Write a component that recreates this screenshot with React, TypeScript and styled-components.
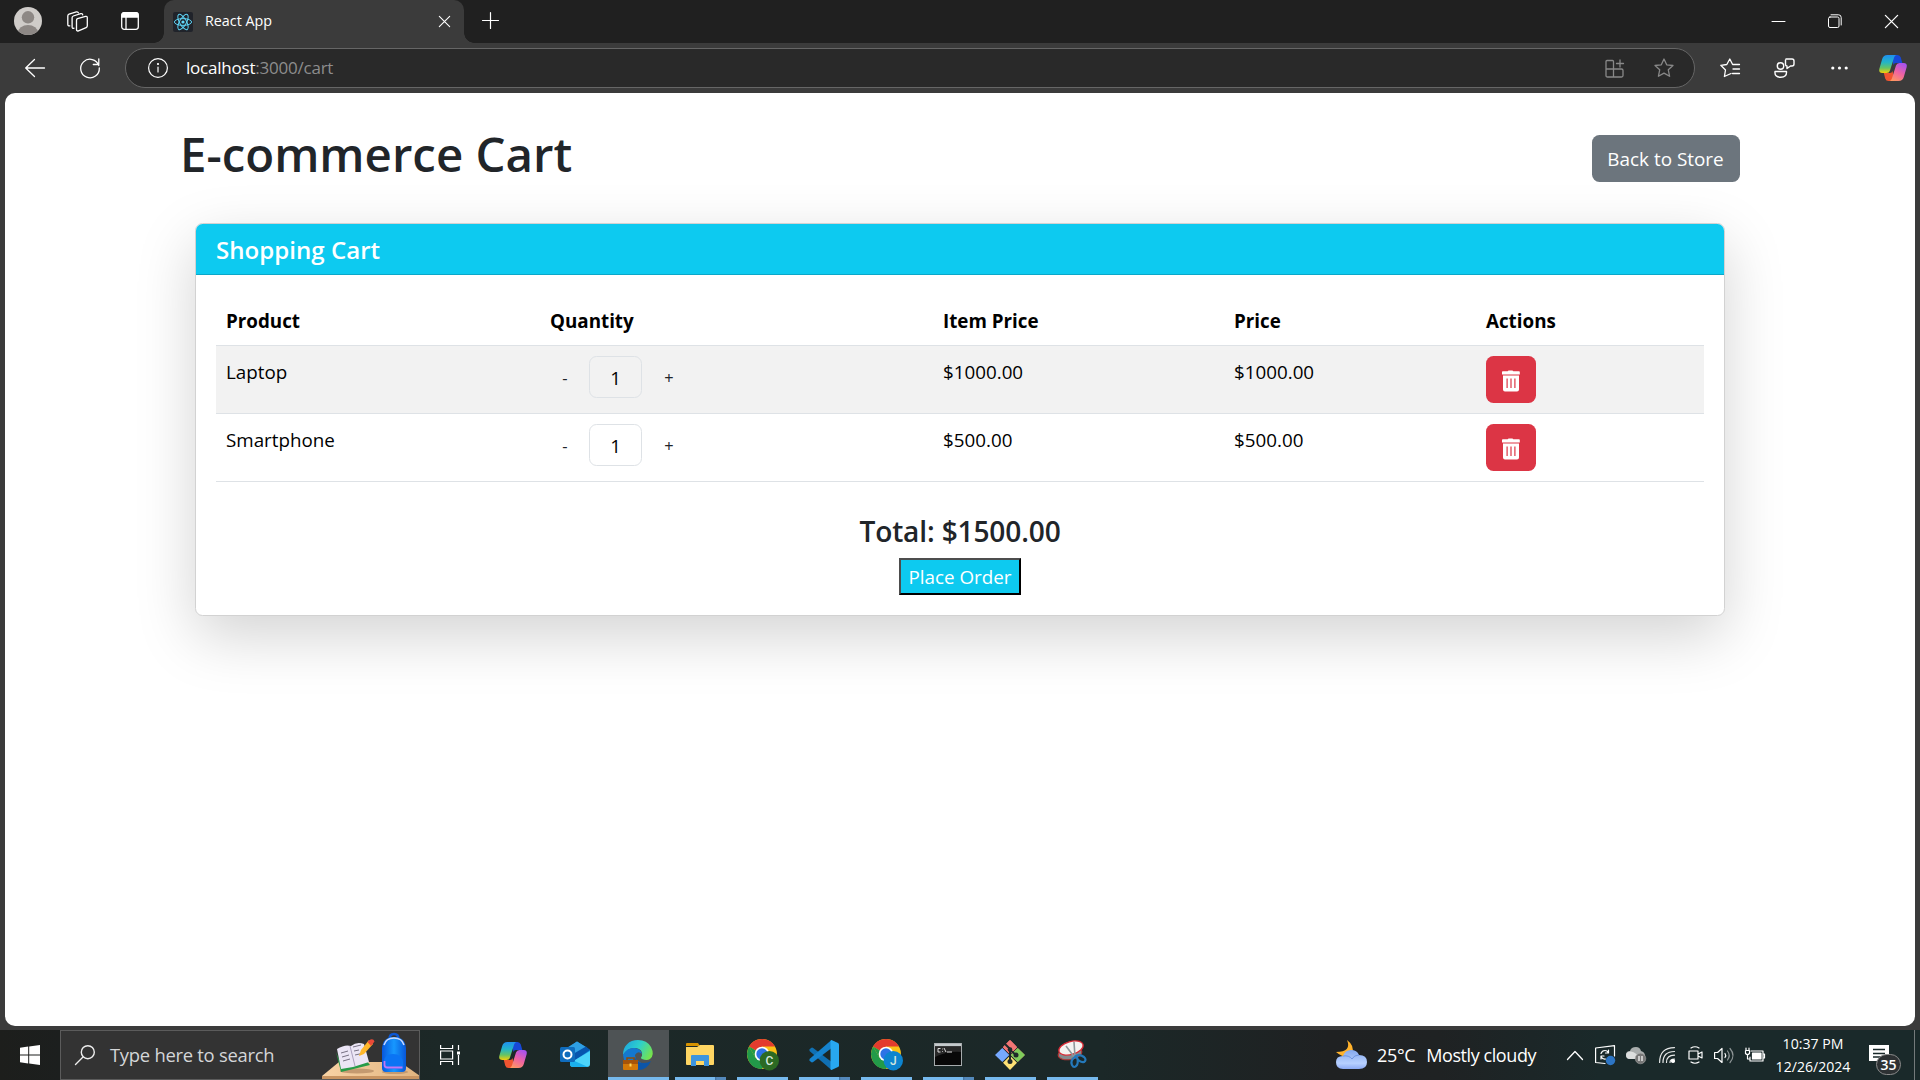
import React from "react";
import styled, { createGlobalStyle } from "styled-components";

const Global = createGlobalStyle`
  *, *::before, *::after { box-sizing: border-box; }
  html, body { margin: 0; padding: 0; }
  body {
    width: 1920px; height: 1080px; overflow: hidden; background: #3b3b3b;
    font-family: "Open Sans", "Noto Sans", sans-serif;
  }
  h1, h2, h3, h5, p { margin: 0; }
  svg { display: block; overflow: visible; flex: none; }
  button { font-family: inherit; cursor: pointer; }
`;

const Window = styled.div`
  width: 1920px; height: 1080px; display: flex; flex-direction: column; background: #3b3b3b;
`;

/* ---------- title bar ---------- */
const TabBar = styled.header`
  height: 43px; flex: none; display: flex; background: #202020; color: #fff;
`;
const TabTools = styled.div`
  width: 164px; display: flex; align-items: flex-start; padding: 7px 0 0 14px;
`;
const ToolSlot = styled.div<{ $w: number; $top?: number }>`
  width: ${(p) => p.$w}px; padding-top: ${(p) => p.$top ?? 0}px; flex: none;
`;
const Tab = styled.div`
  width: 300px; height: 43px; background: #3b3b3b; border-radius: 10px 10px 0 0;
  display: flex; align-items: center; padding: 0 14px 0 9px; position: relative;
  &::before, &::after {
    content: ""; position: absolute; bottom: 0; width: 10px; height: 10px;
  }
  &::before { left: -10px; background: radial-gradient(circle at 0 0, transparent 9.5px, #3b3b3b 10px); }
  &::after { right: -10px; background: radial-gradient(circle at 100% 0, transparent 9.5px, #3b3b3b 10px); }
`;
const TabTitle = styled.span`
  flex: 1; margin-left: 12px; font-size: 14.3px; line-height: 20px; color: #fff; padding-bottom: 2px;
`;
const NewTab = styled.div`padding: 12px 0 0 18px;`;
const WindowButtons = styled.div`
  margin-left: auto; display: flex; align-items: center; gap: 43px; padding: 0 22px 1px 0;
`;

/* ---------- address bar ---------- */
const NavBar = styled.nav`
  height: 50px; flex: none; display: flex; align-items: flex-start; padding: 5px 0 0 25px;
`;
const NavIcon = styled.div<{ $w: number }>`
  width: ${(p) => p.$w}px; height: 40px; flex: none; display: flex; align-items: center;
`;
const Address = styled.div`
  width: 1570px; height: 40px; flex: none; display: flex; align-items: center;
  border: 1px solid #666; border-radius: 20px; background: #292929; padding: 0 20px 0 22px;
`;
const Url = styled.span`
  flex: 1; margin-left: 18px; font-size: 17px; letter-spacing: -0.22px; line-height: 24px; color: #8d8d8d;
  b { font-weight: 400; color: #fff; }
`;
const AddressIcons = styled.div`display: flex; align-items: center; gap: 30px; color: #888;`;
const NavRight = styled.div`
  flex: 1; height: 40px; display: flex; align-items: center; padding-left: 25px; color: #fff;
`;

/* ---------- page ---------- */
const Page = styled.main`
  width: 1910px; height: 933px; flex: none; margin: 0 5px; background: #fff; border-radius: 10px;
  overflow: hidden; color: #212529;
`;
const PageHeader = styled.div`
  display: flex; justify-content: space-between; align-items: flex-start;
  padding: 30px 175px 0 175px; height: 130px;
`;
const PageTitle = styled.h1`
  font-size: 47.4px; line-height: 60px; font-weight: 600; padding-top: 1px;
`;
const StoreButton = styled.button`
  margin-top: 12px; width: 148px; height: 47px; border: 0; border-radius: 7.5px; background: #6c757d;
  color: #fff; font-size: 18.9px; line-height: 30px; padding: 0 1px 0 0; white-space: nowrap;
`;
const Card = styled.section`
  width: 1530px; height: 393px; margin: 0 auto; background: #fff; border: 1px solid #d2d2d2;
  border-radius: 7.5px; box-shadow: 0 20px 60px rgba(0, 0, 0, 0.175);
`;
const CardHeader = styled.div`
  height: 51px; background: #0dcaf0; border-bottom: 1px solid #0ba7c8; border-radius: 6.5px 6.5px 0 0;
  padding: 11px 20px 9px; color: #fff;
`;
const CardTitle = styled.h5`font-size: 24.1px; line-height: 30px; font-weight: 600;`;
const CardBody = styled.div`padding: 20px; display: flex; flex-direction: column; align-items: center;`;
const Table = styled.div`width: 1488px; color: #000; font-size: 18.8px; line-height: 30px;`;
const Row = styled.div<{ $striped?: boolean; $head?: boolean }>`
  display: grid; grid-template-columns: 324px 393px 291px 252px 1fr;
  height: ${(p) => (p.$head ? 51 : 68)}px; border-bottom: 1px solid #dee2e6;
  background: ${(p) => (p.$striped ? "#f2f2f2" : "#fff")};
  font-weight: ${(p) => (p.$head ? 700 : 400)};
`;
const Cell = styled.div`padding: 11px 10px 9px;`;
const ControlCell = styled.div`padding: 10px; display: flex; align-items: flex-start;`;
const StepButton = styled.button`
  width: 30px; height: 42px; border: 0; background: transparent; padding: 2px 0 0; color: #212529;
  font-size: 16.4px; line-height: 26px;
`;
const Count = styled.span`
  width: 53px; height: 42px; margin: 0 12px 0 9px; border: 1px solid #dee2e6; border-radius: 7.5px;
  display: grid; place-items: center; line-height: 30px; padding-top: 2px;
`;
const DeleteButton = styled.button`
  width: 50px; height: 47px; padding: 2px 0 0; border: 0; border-radius: 7.5px; background: #dc3545;
  display: grid; place-items: center;
`;
const Total = styled.h3`
  margin-top: 31px; font-size: 28.1px; line-height: 36px; font-weight: 600; letter-spacing: -0.15px;
`;
const OrderButton = styled.button`
  margin-top: 9px; width: 122px; height: 37px; padding: 0; background: #0dcaf0; color: #fff;
  border: 2px solid; border-color: #4d4d4d #000 #000 #4d4d4d; font-size: 18.8px; line-height: 30px;
  white-space: nowrap;
`;

/* ---------- taskbar ---------- */
const Taskbar = styled.footer`
  height: 50px; flex: none; margin-top: 4px; display: flex; color: #fff;
  background: linear-gradient(90deg, #1d1e1c 0, #1c1f1e 60px, #1c2827 440px, #1b2828 1100px, #1f2122 1330px, #1f2223 1440px, #1a292a 1600px, #1a292a 100%);
`;
const Start = styled.div`width: 60px; display: grid; place-items: center;`;
const Search = styled.div`
  width: 360px; height: 50px; border: 1px solid #5b5b5b; background: #333; display: flex;
  align-items: center; padding-left: 14px; overflow: hidden;
`;
const SearchText = styled.span`
  flex: 1; margin-left: 15px; font-size: 18.4px; letter-spacing: -0.26px; line-height: 28px;
  color: #d4d6d8; white-space: nowrap;
`;
const SearchArtwork = styled.div`margin-right: -1px;`;
const AppList = styled.div`display: flex;`;
const AppSlot = styled.div<{ $active?: boolean; $w?: number }>`
  width: ${(p) => p.$w ?? 61}px; margin-right: ${(p) => (p.$w ? 0 : 1)}px; height: 50px; display: flex;
  flex-direction: column; align-items: center; justify-content: space-between;
  background: ${(p) => (p.$active ? "#4e5355" : "transparent")};
`;
const AppIcon = styled.div`height: 47px; display: grid; place-items: center; padding: 2px 1px 0 0;`;
const Underline = styled.div<{ $full?: boolean; $split?: boolean }>`
  width: ${(p) => (p.$full ? "100%" : "51px")}; height: 3px;
  background: ${(p) => (p.$split ? "linear-gradient(90deg,#76b9ed 40px,#3f6f9d 40px,#5489bb 42px)" : "#76b9ed")};
`;
const Weather = styled.div`
  margin-left: auto; width: 224px; display: flex; align-items: center; font-size: 18px; white-space: nowrap;
`;
const Temp = styled.span`margin: 0 11px 0 10px; letter-spacing: -0.35px;`;
const Cond = styled.span`letter-spacing: -0.42px;`;
const Tray = styled.div`display: flex; align-items: center; width: 212px;`;
const TraySlot = styled.div<{ $w: number }>`width: ${(p) => p.$w}px; display: grid; place-items: center;`;
const Clock = styled.div`
  width: 82px; display: flex; flex-direction: column; align-items: center; padding-top: 2px;
  font-size: 14.1px; line-height: 23px; white-space: nowrap;
`;
const Notice = styled.div`width: 45px; margin-left: 15px; padding-top: 15px; position: relative;`;
const Badge = styled.span`
  position: absolute; left: 7px; top: 24px; width: 25px; height: 21px; border-radius: 11px;
  border: 1px solid #8b8b8b; background: #2d3133; font-size: 14px; font-weight: 600; line-height: 19px;
  text-align: center;
`;
const Peek = styled.div`width: 6px; border-left: 1px solid #747a7b;`;

const line = { fill: "none", stroke: "currentColor", strokeLinecap: "round" as const, strokeLinejoin: "round" as const };

const Avatar = () => (
  <svg width="28" height="28" viewBox="0 0 28 28">
    <clipPath id="av"><circle cx="14" cy="14" r="14" /></clipPath>
    <circle cx="14" cy="14" r="14" fill="#cfccc9" />
    <g clipPath="url(#av)" fill="#8d8885"><circle cx="14" cy="10.3" r="6.2" /><ellipse cx="14" cy="25.5" rx="10" ry="7.5" /></g>
  </svg>
);
const Workspaces = () => (
  <svg width="21" height="21" viewBox="0 0 21 21" {...line} strokeWidth="1.3">
    <path d="M10.5 7.7 18.5 5.4q1.8-.4 1.8 1.3v8q0 1.4-1.2 1.9l-7.6 3.2q-2 .7-2-1.3V9.4q0-1.3 1-1.7Z" />
    <path d="M7 17.2q-1.9.6-1.9-1.2V6.8q0-1.4 1.2-1.8l7.4-2.3q1.700-.4 2 1.1" />
    <path d="M2.8 14.8q-2 .3-2-1.4V5q0-1.4 1.2-1.8L9.4.9q1.6-.4 2 1" />
  </svg>
);
const TabActions = () => (
  <svg width="18" height="18" viewBox="0 0 18 18" {...line} strokeWidth="1.3">
    <rect x=".7" y=".7" width="16.6" height="16.6" rx="2.5" /><path d="M1 3q0-2.3 2.3-2.3h11.4Q17 .7 17 3v2H1Z" fill="currentColor" /><path d="M5 5v12" />
  </svg>
);
const ReactLogo = () => (
  <svg width="20" height="20" viewBox="0 0 20 20" fill="none" stroke="#5ed3f3" strokeWidth="1">
    <rect width="20" height="20" rx="2" fill="#20232a" stroke="none" />
    {[0, 60, 120].map((a) => <ellipse key={a} cx="10" cy="10" rx="8.6" ry="3.4" transform={`rotate(${a} 10 10)`} />)}
    <circle cx="10" cy="10" r="1.6" fill="#61dafb" stroke="none" />
  </svg>
);
const Cross = ({ s = 10 }: { s?: number }) => (
  <svg width={s} height={s} viewBox="0 0 10 10" {...line} strokeWidth="1"><path d="M.3.3 9.7 9.7M9.7.3.3 9.7" /></svg>
);
const StarIcon = () => (
  <svg width="20" height="20" viewBox="0 0 20 20" {...line} strokeWidth="1.3">
    <path d="m10 1 2.7 5.8 6.3.7-4.7 4.3 1.3 6.5L10 15.1l-5.6 3.2 1.3-6.5L1 7.5l6.3-.7Z" />
  </svg>
);
const Copilot = () => (
  <svg width="28" height="26" viewBox="0 0 28 26">
    <defs>
      <linearGradient id="cA" x1="0" y1="0" x2="0" y2="1"><stop offset="0" stopColor="#1f8ff0" /><stop offset=".4" stopColor="#23b5c8" /><stop offset=".72" stopColor="#66c465" /><stop offset="1" stopColor="#f5cf08" /></linearGradient>
      <linearGradient id="cB" x1=".7" y1="0" x2=".2" y2="1"><stop offset="0" stopColor="#a952ed" /><stop offset=".5" stopColor="#ef63a2" /><stop offset="1" stopColor="#ff9860" /></linearGradient>
    </defs>
    <path d="M13 0h5.5q2.5 0 3.3 2.6L23.3 8H17q-2 0-2.6 2Z" fill="#1748d8" />
    <path d="M15 26H9.5Q7 26 6.2 23.4L4.8 18H11q2 0 2.6-2Z" fill="#f05430" />
    <path d="M8.5 0h9q-1.7.3-2.4 2.6L11 15.5Q10.2 18 7.5 18H3.5Q-.5 18 .3 14L3.2 4Q4.3 0 8.5 0Z" fill="url(#cA)" />
    <path d="M19.5 26h-9q1.7-.3 2.4-2.6L17 10.5Q17.8 8 20.5 8h4Q28.5 8 27.7 12L24.8 22Q23.7 26 19.5 26Z" fill="url(#cB)" />
  </svg>
);
const Trash = () => (
  <svg width="20" height="22" viewBox="0 0 20 22">
    <path fill="#fff" d="M6.700 1.300q.2-.8 1.200-.8h3.200q1 0 1.200.8h5.700q.8 0 .8.800V4.500H1V2.100q0-.8.8-.8Z" />
    <path fill="#fff" fillRule="evenodd" d="M2 5.600h16v13.900q0 2-2 2h-12q-2 0-2-2ZM5.500 8.500v9.500h1.200V8.500Zm3.900 0v9.500h1.200V8.500Zm3.900 0v9.500h1.200V8.500Z" />
  </svg>
);
const SearchArt = () => (
  <svg width="98" height="48" viewBox="0 0 98 48">
    <defs>
      <linearGradient id="bag" x1="0" x2="1"><stop stopColor="#0757de" /><stop offset=".5" stopColor="#1798ff" /><stop offset="1" stopColor="#0756d8" /></linearGradient>
      <linearGradient id="desk" x1="0" x2="1"><stop stopColor="#f9d3a5" /><stop offset="1" stopColor="#e0b480" /></linearGradient>
    </defs>
    <path d="M17 31h61l20 14H0Z" fill="url(#desk)" /><path d="M0 45h98v4H0Z" fill="#c99562" />
    <ellipse cx="35" cy="40" rx="17" ry="2.5" fill="#c49a70" /><ellipse cx="73" cy="41" rx="13" ry="2" fill="#c49a70" />
    <path d="m14 21 5 20 29-7-4-5-24 7Z" fill="#279b48" />
    <path d="m15 18 4 20 12-2 16-5-5-18q-7-3-13 2-6-2-14 3Z" fill="#ebe5f5" />
    <path d="M28 15 33 35" stroke="#aaa0bd" strokeWidth="1" />
    <path d="m19 22 7-2m-6 6 7-2m-6 6 7-2m3-12 8-2m-7 6 5-1m-4 5 9-2" stroke="#777184" strokeWidth="1" />
    <path d="m37 25 2-6L47 9l4 4-9 10Z" fill="#ffb72b" /><path d="m45.500 11 3-2.500q3-1 4 2l-3.500 4.500Z" fill="#e94a38" />
    <path d="M67.500 8q0-5 4.500-5t4.500 5" fill="none" stroke="#0b57d4" strokeWidth="2.500" />
    <path d="M60 17q1-11 12-11t12 11v20q0 4-4 4H64q-4 0-4-4Z" fill="url(#bag)" />
    <path d="M62 14q2-7 10-7t10 7" fill="none" stroke="#c9d9ff" strokeWidth="1.5" />
    <path d="M62 31q0-8 9-8t10 8v5q0 2-2 2H64q-2 0-2-2Z" fill="#0b74f4" /><path d="M62.500 30v4q0 2.500 3 2.500h15" stroke="#c176f3" strokeWidth="1.800" fill="none" />
  </svg>
);
const TaskView = () => (
  <svg width="20" height="20" viewBox="0 0 20 20" fill="none" stroke="#fff" strokeWidth="1.2">
    <path d="M.6 0v3.5h12V0M.6 20v-3.5h12V20M.6 6h12v8H.6ZM18.5 0v5m0 5v10" /><path d="M17 6.5h3v3h-3Z" fill="#fff" stroke="none" />
  </svg>
);
const Outlook = () => (
  <svg width="30" height="27" viewBox="0 0 30 27">
    <path d="M5 9 17 .5 30 9v10L17 23 5 17Z" fill="#1490df" /><path d="M5 8 17 .5 26 6 14 15Z" fill="#2e9fe4" />
    <path d="M13 13 26 5.5 30 9 14 20Z" fill="#0755ae" /><path d="M10 22 30 10v13q0 3-3 3H13q-3 0-3-3Z" fill="#4cd4fa" /><path d="m10 18 18 8H13q-3 0-3-3Z" fill="#1ab0ed" />
    <rect y="6" width="15" height="15" rx="1.5" fill="#0f6cbd" /><circle cx="7.5" cy="13.5" r="4" fill="none" stroke="#fff" strokeWidth="2" />
  </svg>
);
const Edge = () => (
  <svg width="30" height="30" viewBox="0 0 30 30">
    <defs><linearGradient id="eg" x1="0" x2="1" y1=".2" y2=".6"><stop stopColor="#1da5df" /><stop offset=".5" stopColor="#2ed0cb" /><stop offset="1" stopColor="#75e34e" /></linearGradient></defs>
    <path d="M0 15C0 6 6 0 15 0q9 0 13 7 4 8-1 12-3 2-8 0-2-1 0-3 1-7-6-8Q5 7 0 15Z" fill="url(#eg)" />
    <path d="M0 15Q4 7 12 8q6 1 7 6-4-4-7 1 0 8 11 9Q6 33 1 20Z" fill="#1378cf" /><path d="M12 17q1 6 9 6 4 0 7-2-4 9-13 9-8-4-3-13Z" fill="#0c55a8" />
    <rect y="20" width="15" height="10" rx="1" fill="#d37907" /><path d="M4 20v-2h7v2" fill="none" stroke="#8f4c08" strokeWidth="1.5" /><path d="M0 20h15v4H0Z" fill="#a65408" /><path d="M6.5 23.5h2v3h-2Z" fill="#ffd75a" />
  </svg>
);
const Folder = () => (
  <svg width="28" height="24" viewBox="0 0 28 24">
    <path d="M0 1q0-1 1-1h11l2 3H0Z" fill="#d69200" /><path d="M0 4h11l3-2h13q1 0 1 1v18q0 1-1 1H1q-1 0-1-1Z" fill="#ffd663" />
    <path d="M5 23V13q0-1 1-1h16q1 0 1 1v10h-5v-5h-8v5Z" fill="#3d95df" />
  </svg>
);
const Chrome = ({ letter, fill }: { letter: string; fill: string }) => (
  <svg width="32" height="32" viewBox="-1 0 32 32">
    <circle cx="15" cy="15" r="15" fill="#fbc116" /><path d="M15 15 2 7.5Q6 0 15 0t13 7.5H15Z" fill="#e33b2e" />
    <path d="M2 7.5Q-2 15 2 22.500 6 30 15 30l6.5-11.2L8.500 18.800Z" fill="#229a49" />
    <path d="M2 7.5 8.500 18.800 15 15Z" fill="#229a49" /><circle cx="15" cy="15" r="7.3" fill="#fff" /><circle cx="15" cy="15" r="5.7" fill="#2d73e6" />
    <circle cx="22.3" cy="21.7" r="9.7" fill={fill} /><text x="22.3" y="26" fill="#d5e6de" fontFamily="Roboto, sans-serif" fontSize="12" fontWeight="500" textAnchor="middle">{letter}</text>
  </svg>
);
const VsCode = () => (
  <svg width="30" height="30" viewBox="0 0 30 30">
    <path d="M.5 9.5 2 8q1-.8 2.200 0L24 23l-1.500 7L.5 11Z" fill="#1070b3" /><path d="M.5 20.500 2 22q1 .8 2.200 0L24 7l-1.500-7L.5 19Z" fill="#1583ce" />
    <path d="M22.500 0 29 3q1 .5 1 1.500v21q0 1-1 1.500L22.500 30q-1 0-1-1.500V1.500Q21.500 0 22.500 0Z" fill="#28a8f0" />
  </svg>
);
const Terminal = () => (
  <svg width="28" height="23" viewBox="0 0 28 23">
    <rect x=".5" y=".5" width="27" height="22" fill="#080808" stroke="#a6abad" /><path d="M1 2h26" stroke="#c5cbcd" strokeWidth="2.5" />
    <path d="M1 14Q13 8 27 9V4H1Z" fill="#282828" /><path d="M6.5 5.500H4V9h2.500M8 6h.7m-.7 2.500h.7M10 5l2 4m1 0h5" fill="none" stroke="#ddd" />
  </svg>
);
const Git = () => (
  <svg width="30" height="30" viewBox="0 0 30 30">
    <g transform="rotate(45 15 15)"><rect x="4.5" y="4.5" width="10" height="10" rx="1" fill="#f27574" /><rect x="15.5" y="4.5" width="10" height="10" rx="1" fill="#f27574" /></g>
    <g transform="rotate(45 15 15)"><rect x="4.500" y="4.500" width="10" height="10" rx="1" fill="#f27574" /></g>
    <path d="M15 0 22 7.200 15 14.400 8 7.200Z" fill="#f27574" />
    <path d="M22.700 8 30 15l-7.300 7-7-7Z" fill="#80cc5b" />
    <path d="M7.300 8 14.300 15l-7 7L0 15Z" fill="#76a9ff" />
    <path d="M15 15.700 22 22.800 15 30 8 22.800Z" fill="#ffe275" />
    <path d="M10 4 15 9v13m0-12 6 5" fill="none" stroke="#20292a" strokeWidth="2" /><circle cx="15" cy="9.500" r="2.300" fill="#20292a" /><circle cx="15" cy="21.500" r="2.500" fill="#20292a" /><circle cx="21" cy="15" r="2.500" fill="#20292a" />
  </svg>
);
const Snip = () => (
  <svg width="28" height="29" viewBox="0 0 28 29">
    <ellipse cx="12" cy="13.5" rx="12" ry="6" fill="#858b8e" stroke="#b23535" transform="rotate(-10 12 13.500)" />
    <ellipse cx="13" cy="8" rx="12.500" ry="6.500" fill="#f4f3f1" stroke="#d82a35" strokeWidth="1.300" transform="rotate(-16 13 8)" />
    <path d="m8 6 9 12M16 2l1 15" stroke="#8f979b" strokeWidth="1.6" /><path d="M17 17q-5 3-3 8 2 4 5 0 2-5-1-9 4-2 8 1 3 3 0 5-4 1-8-5Z" fill="none" stroke="#2479bb" strokeWidth="2.2" />
  </svg>
);
const Cloud = () => (
  <svg width="31" height="30" viewBox="0 0 31 30">
    <defs><linearGradient id="cl" x1="0" x2="0" y1="0" y2="1"><stop stopColor="#85a9ee" /><stop offset=".7" stopColor="#b7d0ff" /><stop offset="1" stopColor="#8caaf4" /></linearGradient></defs>
    <path d="M11 0q8 6 5 13-5 8-16-1Q16 12 11 0Z" fill="#ffb22c" />
    <path d="M7 29q-7 0-7-7 0-6 7-6 2-6 8-6t8 5q8 0 8 7 0 7-8 7Z" fill="url(#cl)" /><path d="M7 16q6-1 9 3 2-4 7-4" fill="none" stroke="#6f94df" />
  </svg>
);

const items = [
  { name: "Laptop", qty: 1, price: 1000 },
  { name: "Smartphone", qty: 1, price: 500 },
];
const money = (n: number) => `$${n.toFixed(2)}`;

export default function App() {
  const total = items.reduce((s, i) => s + i.qty * i.price, 0);
  return (
    <Window>
      <Global />
      <TabBar>
        <TabTools>
          <ToolSlot $w={53}><Avatar /></ToolSlot>
          <ToolSlot $w={54} $top={4}><Workspaces /></ToolSlot>
          <ToolSlot $w={20} $top={5}><TabActions /></ToolSlot>
        </TabTools>
        <Tab><ReactLogo /><TabTitle>React App</TabTitle><Cross s={11} /></Tab>
        <NewTab><svg width="17" height="17" viewBox="0 0 17 17" {...line} strokeWidth="1.2"><path d="M8.5.5v16M.5 8.5h16" /></svg></NewTab>
        <WindowButtons>
          <svg width="13" height="13" viewBox="0 0 13 13" {...line}><path d="M0 6.5h13" /></svg>
          <svg width="14" height="14" viewBox="0 0 14 14" {...line}><rect x=".5" y="3" width="10.5" height="10.5" rx="1.5" /><path d="M3 .8h7.500q2.700 0 2.700 2.700V11" /></svg>
          <Cross s={13} />
        </WindowButtons>
      </TabBar>
      <NavBar>
        <NavIcon $w={55}><svg width="20" height="18" viewBox="0 0 20 18" {...line} stroke="#fff" strokeWidth="1.3"><path d="M19.5 9H.7M9.5.5.7 9l8.800 8.500" /></svg></NavIcon>
        <NavIcon $w={45}><svg width="20" height="20" viewBox="0 0 20 20" {...line} stroke="#fff" strokeWidth="1.3"><path d="M18.800 7.500A9.300 9.300 0 1 0 19.300 10M18.800.8v5.700h-5.500" /></svg></NavIcon>
        <Address>
          <svg width="20" height="20" viewBox="0 0 20 20" {...line} stroke="#fff" strokeWidth="1.2"><circle cx="10" cy="10" r="9.4" /><path d="M10 9v5" /><circle cx="10" cy="6" r=".5" fill="#fff" /></svg>
          <Url><b>localhost</b>:3000/cart</Url>
          <AddressIcons>
            <svg width="19" height="19" viewBox="0 0 19 19" {...line} strokeWidth="1.3"><path d="M2 1.5h5.500q1 0 1 1V10H1V2.500q0-1 1-1ZM1 10h7.500v8H2.500Q1 18 1 16.500ZM8.500 10h8q1.500 0 1.500 1.500v5q0 1.500-1.500 1.500h-8ZM15 1v7m-3.500-3.500h7" /></svg>
            <StarIcon />
          </AddressIcons>
        </Address>
        <NavRight>
          <NavIcon $w={54}><svg width="20" height="20" viewBox="0 0 20 20" {...line} strokeWidth="1.3"><path d="M11 15.500 4.400 18.500 5.500 12 .8 7.300l6-.8L9.800 1l2.800 5.500H19.500M13 11h6.500m-7 4.500h7" /></svg></NavIcon>
          <NavIcon $w={57}><svg width="21" height="20" viewBox="0 0 21 20" {...line} strokeWidth="1.4"><circle cx="6.5" cy="8" r="3.2" /><path d="M1 13.500h11.500Q13 19.300 6.700 19.300T1 13.500ZM12 1h6q2 0 2 2v3q0 2-2 2h-1.500L13 10.500V8q-1.500 0-1.500-1.500V2" /></svg></NavIcon>
          <NavIcon $w={48}><svg width="17" height="4" viewBox="0 0 17 4"><g fill="#fff"><circle cx="1.8" cy="2" r="1.6" /><circle cx="8.5" cy="2" r="1.6" /><circle cx="15.2" cy="2" r="1.6" /></g></svg></NavIcon>
          <Copilot />
        </NavRight>
      </NavBar>

      <Page>
        <PageHeader><PageTitle>E-commerce Cart</PageTitle><StoreButton>Back to Store</StoreButton></PageHeader>
        <Card>
          <CardHeader><CardTitle>Shopping Cart</CardTitle></CardHeader>
          <CardBody>
            <Table>
              <Row $head>{["Product", "Quantity", "Item Price", "Price", "Actions"].map((h) => <Cell key={h}>{h}</Cell>)}</Row>
              {items.map((it, i) => (
                <Row key={it.name} $striped={i % 2 === 0}>
                  <Cell>{it.name}</Cell>
                  <ControlCell><StepButton>-</StepButton><Count>{it.qty}</Count><StepButton>+</StepButton></ControlCell>
                  <Cell>{money(it.price)}</Cell>
                  <Cell>{money(it.price * it.qty)}</Cell>
                  <ControlCell><DeleteButton><Trash /></DeleteButton></ControlCell>
                </Row>
              ))}
            </Table>
            <Total>Total: {money(total)}</Total>
            <OrderButton>Place Order</OrderButton>
          </CardBody>
        </Card>
      </Page>

      <Taskbar>
        <Start><svg width="20" height="20" viewBox="0 0 20 20" fill="#fff"><path d="M0 2.800 8.200 1.600V9.500H0ZM9.200 1.500 20 0v9.500H9.200ZM0 10.500h8.200v8L0 17.300ZM9.200 10.500H20V20L9.200 18.600Z" /></svg></Start>
        <Search>
          <svg width="20" height="20" viewBox="0 0 20 20" {...line} stroke="#eee" strokeWidth="1.4"><circle cx="12.8" cy="7.2" r="6.5" /><path d="M8 12 .5 19.500" /></svg>
          <SearchText>Type here to search</SearchText><SearchArtwork><SearchArt /></SearchArtwork>
        </Search>
        <AppList>
          <AppSlot $w={60}><AppIcon><TaskView /></AppIcon></AppSlot>
          <AppSlot $w={67}><AppIcon><Copilot /></AppIcon></AppSlot>
          <AppSlot $w={57}><AppIcon><Outlook /></AppIcon></AppSlot>
          <AppSlot $w={4} />
          <AppSlot $active $w={61}><AppIcon><Edge /></AppIcon><Underline $full /></AppSlot>
          <AppSlot $w={63}><AppIcon><Folder /></AppIcon><Underline $split /></AppSlot>
          <AppSlot><AppIcon><Chrome letter="C" fill="#2c6a23" /></AppIcon><Underline /></AppSlot>
          <AppSlot><AppIcon><VsCode /></AppIcon><Underline $split /></AppSlot>
          <AppSlot><AppIcon><Chrome letter="J" fill="#0d84cf" /></AppIcon><Underline /></AppSlot>
          <AppSlot><AppIcon><Terminal /></AppIcon><Underline $split /></AppSlot>
          <AppSlot><AppIcon><Git /></AppIcon><Underline /></AppSlot>
          <AppSlot><AppIcon><Snip /></AppIcon><Underline /></AppSlot>
        </AppList>
        <Weather><Cloud /><Temp>25°C</Temp><Cond>Mostly cloudy</Cond></Weather>
        <Tray>
          <TraySlot $w={30}><svg width="16" height="9" viewBox="0 0 16 9" {...line} strokeWidth="1.3"><path d="m.5 8.500 7.500-8 7.500 8" /></svg></TraySlot>
          <TraySlot $w={30}><svg width="20" height="20" viewBox="0 0 20 20" {...line} strokeWidth="1.2"><path d="M10 18.500.6 17.500V3L19.500.6V11M6 8.500q1-3 4-3 2.500 0 3.500 2.500M13.500 5v3h-3M6 14v-3h3M6 11.500q1.500 3 4.500 2.500" /><circle cx="15.5" cy="15.5" r="4.7" fill="#2d75c4" stroke="none" /></svg></TraySlot>
          <TraySlot $w={32}><svg width="20" height="17" viewBox="0 0 20 17"><path d="M4 12q-4 0-4-4t4-4q1-4 6-4 4 0 5 4 4 1 4 5l-4 3Z" fill="#a9adad" /><path d="M4 12q-4 0-4-4 0-3 4-3.500 3-.5 7 3l3 4.500Z" fill="#dcdede" /><circle cx="14.5" cy="11.5" r="5.3" fill="#777" stroke="#aaa" strokeWidth=".5" /><path d="M13 9v5m3-5v5" stroke="#fff" strokeWidth="1.2" /></svg></TraySlot>
          <TraySlot $w={29}><svg width="16" height="16" viewBox="0 0 16 16" {...line} strokeWidth="1.2"><path d="M.6 15.500Q.6.600 15.500.600M4 15.500Q4 4.500 15.500 4.500M7.500 15.500q0-7.300 8-7.300M11 15.500q0-3.500 4.500-3.500" opacity=".9" /><circle cx="14" cy="14" r="1.5" fill="#fff" /></svg></TraySlot>
          <TraySlot $w={29}><svg width="15" height="18" viewBox="0 0 15 18" {...line} strokeWidth="1.2"><path d="M1 5h9v8H1Zm9 3 4-2v6l-4-2M3 2q4-2.500 8 0M3 16q4 2.500 8 0" /></svg></TraySlot>
          <TraySlot $w={28}><svg width="20" height="17" viewBox="0 0 20 17" {...line} strokeWidth="1.2"><path d="M.6 5.500h3L8 1.500v14l-4.400-4h-3ZM11 6.500q1.500 2 0 4" /><path d="M13.500 4q3.500 4.500 0 9M16 1.500q6 7 0 14" opacity=".5" /></svg></TraySlot>
          <TraySlot $w={34}><svg width="20" height="14" viewBox="0 0 20 14" {...line} strokeWidth="1.2"><path d="M6 3h12v10H5V9M18 6h1.500v4H18M1 0v2m3-2v2M.5 2.500h4v3q-2 2-4 0Zm2 4V11h2" /><path d="M7.500 5h8.500v6H7.500Z" fill="#fff" /></svg></TraySlot>
        </Tray>
        <Clock><span>10:37 PM</span><span>12/26/2024</span></Clock>
        <Notice><svg width="20" height="20" viewBox="0 0 20 20"><path d="M0 0h20v16H0Z" fill="#fff" /><path d="M4 4.500h12M4 8.500h12M4 12h8" stroke="#1a292a" strokeWidth="1.3" /></svg><Badge>35</Badge></Notice>
        <Peek />
      </Taskbar>
    </Window>
  );
}
